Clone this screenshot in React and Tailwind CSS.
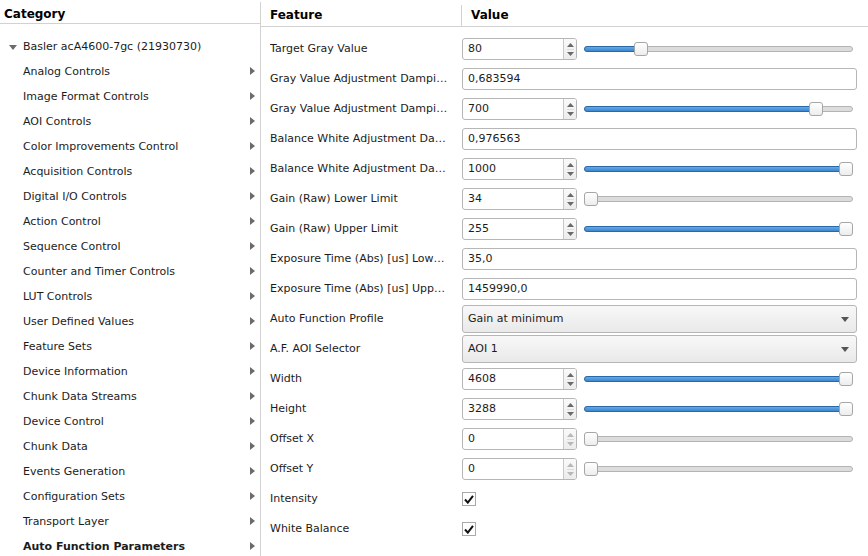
const categories = [
  'Analog Controls',
  'Image Format Controls',
  'AOI Controls',
  'Color Improvements Control',
  'Acquisition Controls',
  'Digital I/O Controls',
  'Action Control',
  'Sequence Control',
  'Counter and Timer Controls',
  'LUT Controls',
  'User Defined Values',
  'Feature Sets',
  'Device Information',
  'Chunk Data Streams',
  'Device Control',
  'Chunk Data',
  'Events Generation',
  'Configuration Sets',
  'Transport Layer',
  'Auto Function Parameters',
]

const features = [
  { name: 'Target Gray Value', type: 'spin', value: '80', pos: 0.195 },
  { name: 'Gray Value Adjustment Damping Abs', type: 'line', value: '0,683594' },
  { name: 'Gray Value Adjustment Damping Raw', type: 'spin', value: '700', pos: 0.883 },
  { name: 'Balance White Adjustment Damping Abs', type: 'line', value: '0,976563' },
  { name: 'Balance White Adjustment Damping Raw', type: 'spin', value: '1000', pos: 1 },
  { name: 'Gain (Raw) Lower Limit', type: 'spin', value: '34', pos: 0 },
  { name: 'Gain (Raw) Upper Limit', type: 'spin', value: '255', pos: 1 },
  { name: 'Exposure Time (Abs) [us] Lower Limit', type: 'line', value: '35,0' },
  { name: 'Exposure Time (Abs) [us] Upper Limit', type: 'line', value: '1459990,0' },
  { name: 'Auto Function Profile', type: 'combo', value: 'Gain at minimum' },
  { name: 'A.F. AOI Selector', type: 'combo', value: 'AOI 1' },
  { name: 'Width', type: 'spin', value: '4608', pos: 1 },
  { name: 'Height', type: 'spin', value: '3288', pos: 1 },
  { name: 'Offset X', type: 'spin', value: '0', pos: 0, dim: true },
  { name: 'Offset Y', type: 'spin', value: '0', pos: 0, dim: true },
  { name: 'Intensity', type: 'check' },
  { name: 'White Balance', type: 'check' },
]

const ArrowRight = () => (
  <svg width="5" height="8" viewBox="0 0 5 8">
    <path d="M0 0 L5 4 L0 8 Z" fill="#6b6b6b" />
  </svg>
)

const ArrowDown = ({ color = '#6b6b6b' }) => (
  <svg width="8" height="5" viewBox="0 0 8 5">
    <path d="M0 0 L8 0 L4 5 Z" fill={color} />
  </svg>
)

const SpinBox = ({ value, dim }) => {
  const c = dim ? '#b8b8b8' : '#6a6a6a'
  return (
    <div className="flex h-[22px] w-[115px] shrink-0 overflow-hidden rounded-[3px] border border-[#b6b6b6] bg-white">
      <div className="flex flex-1 items-center pl-[5px]">{value}</div>
      <div className="flex w-[13px] flex-col items-center justify-center gap-[2px] border-l border-[#c9c9c9] bg-gradient-to-b from-[#fafafa] to-[#ececec]">
        <svg width="7" height="4" viewBox="0 0 7 4">
          <path d="M0 4 L3.5 0 L7 4 Z" fill={c} />
        </svg>
        <div className="h-px w-[7px] bg-[#dcdcdc]" />
        <svg width="7" height="4" viewBox="0 0 7 4">
          <path d="M0 0 L7 0 L3.5 4 Z" fill={c} />
        </svg>
      </div>
    </div>
  )
}

const Slider = ({ pos }) => (
  <div className="relative ml-[7px] mr-[4px] h-[14px] flex-1">
    <div className="absolute left-0 right-0 top-[4px] h-[6px] rounded-full border border-[#b4b4b4] bg-[#dcdcdc]" />
    {pos > 0 && (
      <div
        className="absolute left-0 top-[4px] h-[6px] rounded-full border border-[#2a68a6] bg-gradient-to-b from-[#66aae6] to-[#3b86d0]"
        style={{ width: `calc(${pos} * (100% - 14px) + 7px)` }}
      />
    )}
    <div
      className="absolute top-0 h-[14px] w-[14px] rounded-[3px] border border-[#a6a6a6] bg-gradient-to-b from-white to-[#ededed]"
      style={{ left: `calc(${pos} * (100% - 14px))` }}
    />
  </div>
)

const Value = ({ f }) => {
  if (f.type === 'spin')
    return (
      <div className="flex flex-1 items-center">
        <SpinBox value={f.value} dim={f.dim} />
        <Slider pos={f.pos} />
      </div>
    )
  if (f.type === 'line')
    return (
      <div className="flex h-[22px] flex-1 items-center rounded-[3px] border border-[#b6b6b6] bg-white pl-[5px]">
        {f.value}
      </div>
    )
  if (f.type === 'combo')
    return (
      <div className="flex h-[28px] flex-1 items-center justify-between rounded-[3px] border border-[#b6b6b6] bg-gradient-to-b from-[#f8f8f8] to-[#e9e9e9] pl-[5px] pr-[7px]">
        <span>{f.value}</span>
        <ArrowDown color="#555" />
      </div>
    )
  return (
    <div className="flex h-[14px] w-[14px] items-center justify-center border border-[#a9a9a9] bg-white">
      <svg width="10" height="9" viewBox="0 0 10 9">
        <path d="M1 4.5 L3.8 7.6 L9 0.8" fill="none" stroke="#111" strokeWidth="2" />
      </svg>
    </div>
  )
}

export default function App() {
  return (
    <div className="flex h-[556px] w-[868px] overflow-hidden bg-white font-['DejaVu_Sans',sans-serif] text-[11px] text-[#1c1c1c]">
      {/* category tree */}
      <div className="flex w-[261px] shrink-0 flex-col">
        <div className="flex h-[27px] items-end border-b border-[#d2d2d2]">
          <div className="flex h-full flex-1 items-center pl-[4px] pt-[5px] text-[12px] font-bold text-black">Category</div>
          <div className="h-[21px] w-px bg-[#d2d2d2]" />
        </div>
        <div className="flex-1 border-r border-[#d2d2d2] pt-[11px]">
          <div className="flex h-[25px] items-center">
            <div className="flex w-[23px] justify-center pl-[3px]">
              <ArrowDown />
            </div>
            <span>Basler acA4600-7gc (21930730)</span>
          </div>
          {categories.map((c, i) => (
            <div key={c} className="flex h-[25px] items-center pl-[23px] pr-[5px]">
              <span className={i === categories.length - 1 ? 'flex-1 font-bold' : 'flex-1'}>{c}</span>
              <div className="-mt-[3px] flex">
                <ArrowRight />
              </div>
            </div>
          ))}
        </div>
      </div>

      {/* features */}
      <div className="flex flex-1 flex-col">
        <div className="flex h-[27px] items-end border-b border-[#d2d2d2] text-[12px] font-bold text-black">
          <div className="flex h-full w-[200px] items-center pl-[9px] pt-[4px]">Feature</div>
          <div className="h-[21px] w-px bg-[#d2d2d2]" />
          <div className="flex h-full flex-1 items-center pl-[9px] pt-[4px]">Value</div>
        </div>
        <div className="pr-[11px] pt-[7px]">
          {features.map(f => (
            <div key={f.name} className="flex h-[30px] items-center">
              <div className="w-[201px] shrink-0 pl-[9px] pr-[13px]">
                <div className="truncate">{f.name}</div>
              </div>
              <Value f={f} />
            </div>
          ))}
        </div>
      </div>
    </div>
  )
}
